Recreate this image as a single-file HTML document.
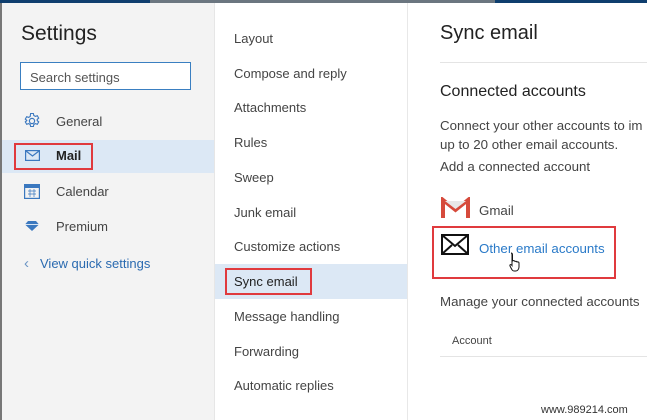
<!DOCTYPE html><html><head><style>
body{margin:0;width:647px;height:420px;overflow:hidden;position:relative;font-family:"Liberation Sans",sans-serif;background:#fff;color:#333}
.a{position:absolute}
.l{left:0;top:3px;width:214px;height:417px;background:#f3f3f3;border-right:1px solid #e6e6e6}
.m{left:215px;top:3px;width:192px;height:417px;background:#fff;border-right:1px solid #e8e8e8}
.it{position:absolute;font-size:13px;color:#444}
.r{font-size:13.3px}
.red{position:absolute;border:2px solid #e03a3e}
</style></head><body>
<div class="a" style="left:0;top:0;width:150px;height:3px;background:#0f3e6e"></div>
<div class="a" style="left:150px;top:0;width:345px;height:3px;background:#6b7680"></div>
<div class="a" style="left:495px;top:0;width:152px;height:3px;background:#0f3e6e"></div>
<div class="a l"></div>
<div class="a" style="left:0;top:3px;width:2px;height:417px;background:#777"></div>
<div class="a m"></div>
<div class="a" style="left:21px;top:22px;font-size:21px;color:#222">Settings</div>
<div class="a" style="left:20px;top:62px;width:171px;height:28px;border:1px solid #3a7fc1;background:#fff;box-sizing:border-box"></div>
<div class="a" style="left:30px;top:70px;font-size:13px;color:#555">Search settings</div>
<svg class="a" style="left:23px;top:112px" width="18" height="18" viewBox="0 0 18 18"><circle cx="9" cy="9" r="2.6" fill="none" stroke="#3b78bf" stroke-width="1.2"/><path d="M7.6 1.5h2.8l.4 2 1.6.9 1.9-.7 1.4 2.4-1.5 1.3v1.2l1.5 1.3-1.4 2.4-1.9-.7-1.6.9-.4 2H7.6l-.4-2-1.6-.9-1.9.7-1.4-2.4 1.5-1.3V8.4L2.3 7.1l1.4-2.4 1.9.7 1.6-.9z" fill="none" stroke="#3b78bf" stroke-width="1.1"/></svg>
<div class="it" style="left:56px;top:114px">General</div>
<div class="a" style="left:2px;top:140px;width:212px;height:33px;background:#dce8f5"></div>
<div class="red" style="left:14px;top:143px;width:75px;height:23px"></div>
<svg class="a" style="left:25px;top:150px" width="15" height="11"><rect x=".6" y=".6" width="13.8" height="9.8" fill="none" stroke="#3b78bf" stroke-width="1.2"/><path d="M1 1l6.5 5 6.5-5" fill="none" stroke="#3b78bf" stroke-width="1.2"/></svg>
<div class="it" style="left:56px;top:148px;color:#222;font-weight:bold">Mail</div>
<svg class="a" style="left:24px;top:183px" width="16" height="16"><rect x=".6" y="1.6" width="14.8" height="13.8" fill="none" stroke="#3b78bf" stroke-width="1.2"/><rect x="1" y="2" width="14" height="3" fill="#3b78bf"/><path d="M4 8h8M4 11h8M6 6v8M10 6v8" stroke="#3b78bf" stroke-width=".7"/></svg>
<div class="it" style="left:56px;top:184px">Calendar</div>
<svg class="a" style="left:25px;top:220px" width="14" height="12"><path d="M3 1h8l3 3.5L7 11 0 4.5z" fill="#3b78bf"/><path d="M0 4.5h14" stroke="#fff" stroke-width=".8"/></svg>
<div class="it" style="left:56px;top:219px">Premium</div>
<div class="a" style="left:24px;top:255px;font-size:15px;color:#6a94c4">&#8249;</div>
<div class="it" style="left:40px;top:256px;color:#2a6ab0">View quick settings</div>
<div class="it" style="left:234px;top:31px">Layout</div>
<div class="it" style="left:234px;top:66px">Compose and reply</div>
<div class="it" style="left:234px;top:100px">Attachments</div>
<div class="it" style="left:234px;top:135px">Rules</div>
<div class="it" style="left:234px;top:170px">Sweep</div>
<div class="it" style="left:234px;top:205px">Junk email</div>
<div class="it" style="left:234px;top:239px">Customize actions</div>
<div class="a" style="left:215px;top:264px;width:192px;height:35px;background:#dce8f5"></div>
<div class="red" style="left:225px;top:268px;width:83px;height:23px"></div>
<div class="it" style="left:234px;top:274px;color:#222">Sync email</div>
<div class="it" style="left:234px;top:309px">Message handling</div>
<div class="it" style="left:234px;top:344px">Forwarding</div>
<div class="it" style="left:234px;top:378px">Automatic replies</div>
<div class="a" style="left:440px;top:22px;font-size:20px;color:#222">Sync email</div>
<div class="a" style="left:440px;top:62px;width:207px;height:1px;background:#e4e4e4"></div>
<div class="a" style="left:440px;top:83px;font-size:16px;color:#222">Connected accounts</div>
<div class="it r" style="left:440px;top:118px;white-space:nowrap">Connect your other accounts to im</div>
<div class="it r" style="left:440px;top:137px">up to 20 other email accounts.</div>
<div class="it r" style="left:440px;top:159px">Add a connected account</div>
<svg class="a" style="left:441px;top:197px" width="29" height="22"><path d="M2 21V3l12.5 10L27 3v18" fill="none" stroke="#d64a3b" stroke-width="4"/><path d="M4 4l10.5 8L25 4" fill="#e8e8e8"/></svg>
<div class="it r" style="left:479px;top:203px">Gmail</div>
<div class="red" style="left:432px;top:226px;width:180px;height:49px"></div>
<svg class="a" style="left:441px;top:234px" width="28" height="21"><rect x="1" y="1" width="26" height="19" fill="#fff" stroke="#111" stroke-width="2"/><path d="M1 1l13 11L27 1M1 20l10-9M27 20l-10-9" fill="none" stroke="#111" stroke-width="2"/></svg>
<div class="it r" style="left:479px;top:241px;color:#2a7ac8">Other email accounts</div>
<svg class="a" style="left:507px;top:252px" width="16" height="20"><path d="M4 1c1.5 0 1.5 1 1.5 2v6l1-.5c1 0 1.5 1 1.5 1 1-.5 2 0 2 .5 1-.3 2 0 2 1v4c0 2-1.5 4-3 4H7c-1.5 0-2-1-4-5-.5-1.5 1-2 2-.5V3c0-1 0-2-1-2z" fill="#fff" stroke="#111" stroke-width="1"/></svg>
<div class="it r" style="left:440px;top:294px;white-space:nowrap">Manage your connected accounts</div>
<div class="a" style="left:452px;top:335px;font-size:11px;color:#444">Account</div>
<div class="a" style="left:440px;top:356px;width:207px;height:1px;background:#e4e4e4"></div>
<div class="a" style="left:541px;top:404px;font-size:11px;color:#333">www.989214.com</div>
</body></html>
